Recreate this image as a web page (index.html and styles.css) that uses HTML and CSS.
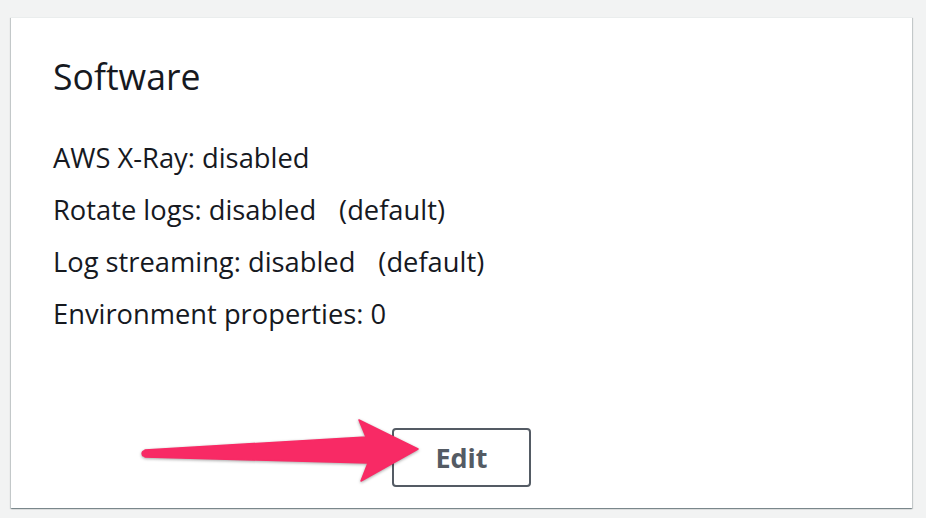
FILE: index.html
```html
<!DOCTYPE html>
<html>
<head>
<meta charset="utf-8">
<link rel="stylesheet" href="styles.css">
</head>
<body>
<div class="card">
  <h2 class="title">Software</h2>
  <div class="rows">
    <div class="row">AWS X-Ray: disabled</div>
    <div class="row">Rotate logs: disabled<span class="def">(default)</span></div>
    <div class="row">Log streaming: disabled<span class="def">(default)</span></div>
    <div class="row">Environment properties: 0</div>
  </div>
  <div class="footer">
    <button class="edit">Edit</button>
  </div>
  <svg class="arrow" width="290" height="75" viewBox="0 0 290 75">
    <path d="M8 37 L229 24 L222 7 L281 36 L224 68 L231 50 L8 44 Z" fill="#f82a65" stroke="#f82a65" stroke-width="1.5" stroke-linejoin="round"/>
    <circle cx="8" cy="40.5" r="3.6" fill="#f82a65"/>
  </svg>
</div>
</body>
</html>
```
FILE: styles.css
```css
html, body {
  margin: 0;
  padding: 0;
}
body {
  background: #f2f3f3;
  width: 926px;
  height: 518px;
  overflow: hidden;
  font-family: "Open Sans", "Noto Sans", sans-serif;
  color: #16191f;
}
.card {
  position: relative;
  box-sizing: border-box;
  margin: 17px 0 0 11px;
  width: 901px;
  height: 491px;
  background: #fff;
  border-top: 1px solid #eaeded;
  box-shadow: 0 1px 1px 0 rgba(0, 28, 36, 0.3), 1px 1px 1px 0 rgba(0, 28, 36, 0.15), -1px 1px 1px 0 rgba(0, 28, 36, 0.15);
  padding: 37px 0 21px 42px;
  display: flex;
  flex-direction: column;
}
.title {
  margin: 0;
  font-size: 35.6px;
  font-weight: 400;
  line-height: 42px;
}
.rows {
  margin-top: 35px;
}
.row {
  font-size: 27.3px;
  line-height: 52px;
  height: 52px;
  white-space: nowrap;
}
.def {
  margin-left: 23px;
}
.footer {
  margin-top: auto;
  padding-left: 339px;
  display: flex;
}
.edit {
  box-sizing: border-box;
  width: 139px;
  height: 59px;
  border: 2px solid #545b64;
  border-radius: 4px;
  background: #fff;
  color: #545b64;
  font-family: "Open Sans", "Noto Sans", sans-serif;
  font-weight: 700;
  font-size: 27px;
  padding: 0;
}
.arrow {
  position: absolute;
  left: 126px;
  top: 395px;
  filter: drop-shadow(0 1px 1.5px rgba(0, 0, 0, 0.35));
}
```
